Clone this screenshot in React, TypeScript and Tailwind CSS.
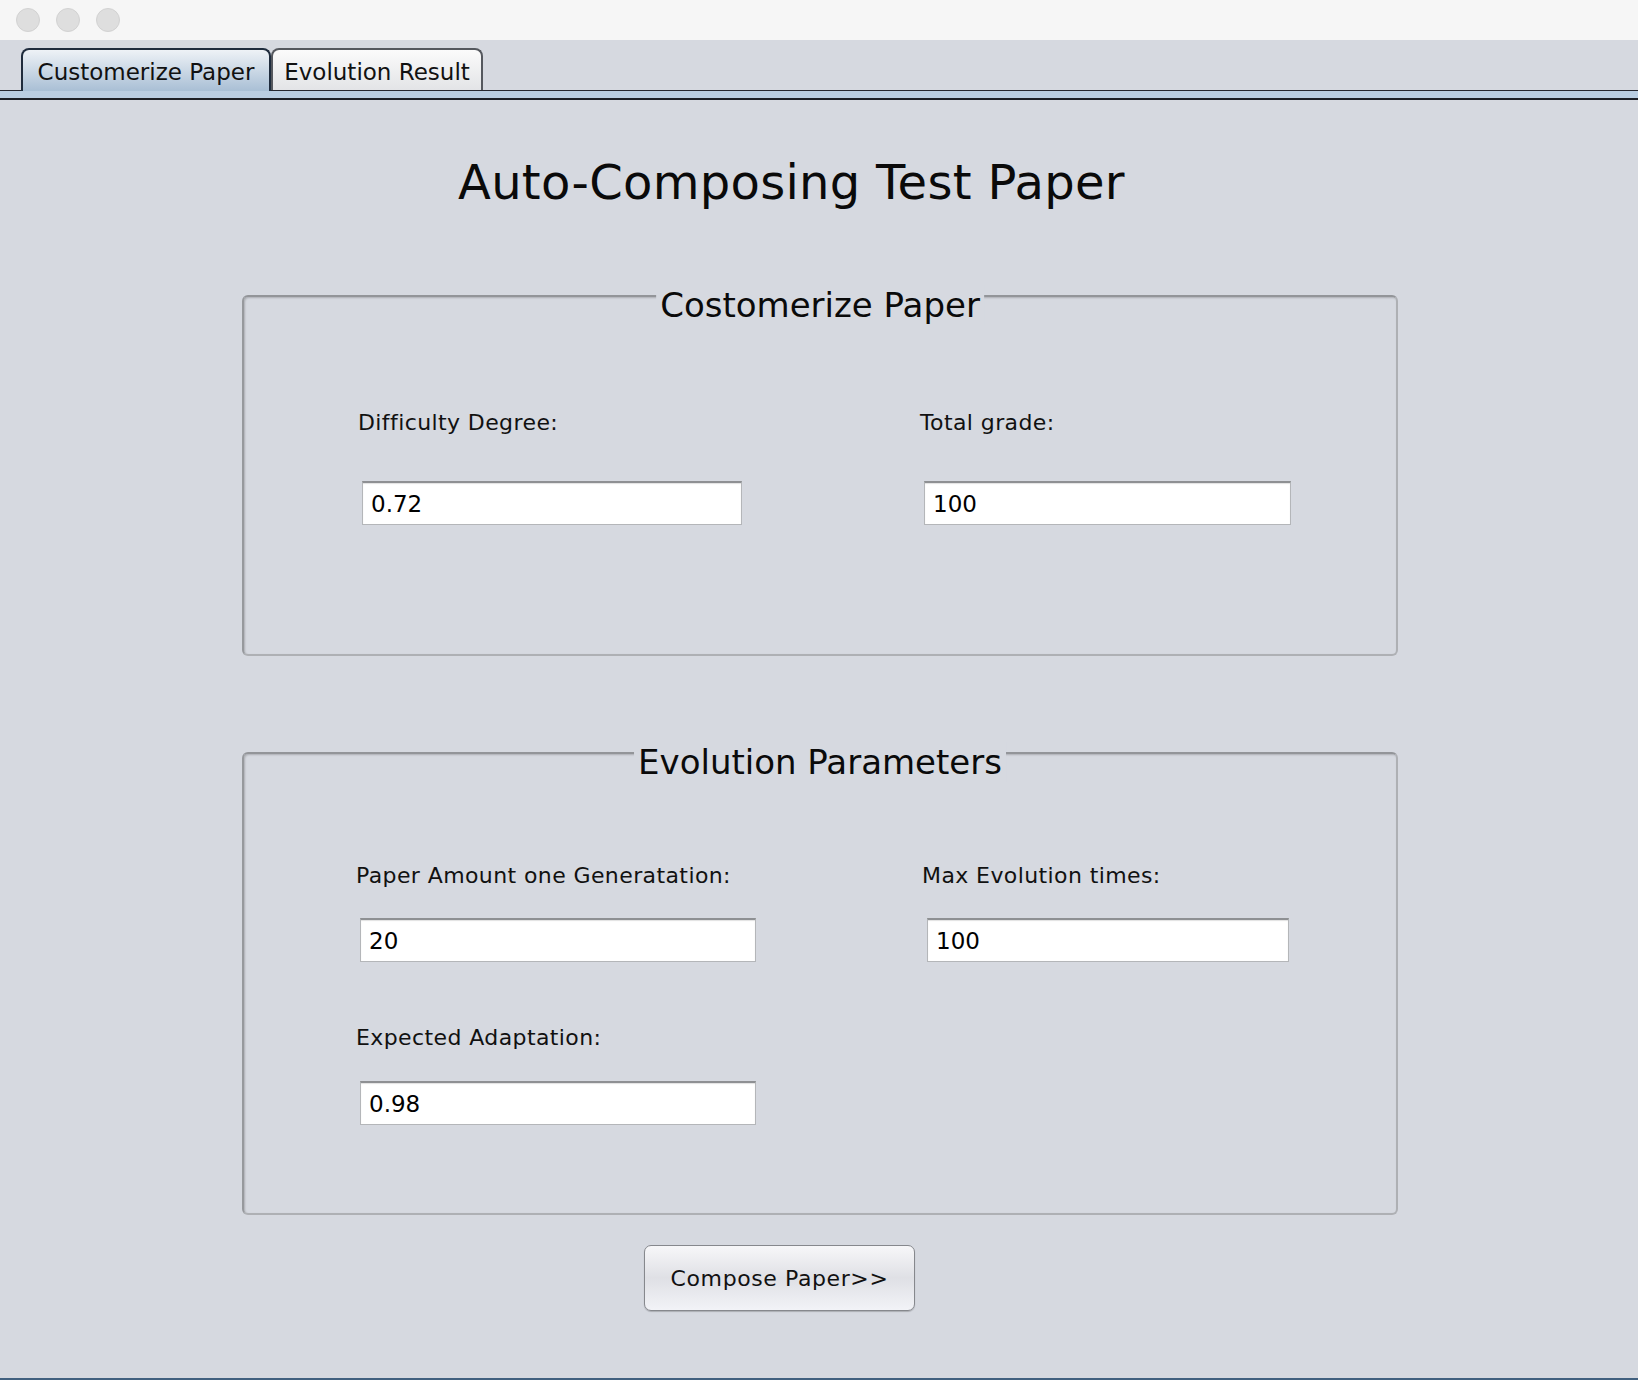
import React from 'react';

const font = "font-['DejaVu_Sans','Liberation_Sans',sans-serif]";

const Field: React.FC<{ label: string; value: string; width: string; gap: string; inset: string }> = ({ label, value, width, gap, inset }) => (
  <div className="flex flex-col">
    <span className="text-[22px] leading-[28px] tracking-[0.4px] text-[#111]">{label}</span>
    <input
      type="text"
      defaultValue={value}
      className={`${gap} ${inset} ${width} h-[44px] bg-white border border-[#b4b6b9] border-t-2 border-t-[#8e9093] shadow-[inset_0_1px_1px_rgba(0,0,0,0.12)] pl-[8px] text-[23px] text-black outline-none ${font}`}
    />
  </div>
);

const Panel: React.FC<{ title: string; height: string; children: React.ReactNode }> = ({ title, height, children }) => (
  <div
    className={`relative ml-[242px] w-[1156px] ${height} rounded-[6px] border-2 border-[#aeb0b4] border-t-[#939599] border-l-[#97999d] shadow-[inset_1px_1px_2px_rgba(0,0,0,0.2)]`}
  >
    <span className="absolute -top-[12px] left-1/2 -translate-x-1/2 bg-[#d6d9e0] px-[4px] text-[34px] leading-[40px] text-[#0a0a0a] whitespace-nowrap">
      {title}
    </span>
    {children}
  </div>
);

export default function App() {
  return (
    <div className={`h-[1380px] w-full flex flex-col bg-[#d6d9e0] ${font}`}>
      {/* window title bar */}
      <div className="h-[40px] bg-[#f6f6f6] flex items-center gap-[16px] pl-[16px]">
        <span className="w-[24px] h-[24px] rounded-full bg-[#dedede] border border-[#d2d2d2]" />
        <span className="w-[24px] h-[24px] rounded-full bg-[#dedede] border border-[#d2d2d2]" />
        <span className="w-[24px] h-[24px] rounded-full bg-[#dedede] border border-[#d2d2d2]" />
      </div>

      {/* tabs */}
      <div className="pt-[8px]">
        <div className="flex items-end h-[43px] border-b border-[#26262e] pl-[21px]">
          <div className="relative z-10 -mb-px h-[43px] w-[250px] rounded-t-[8px] border-2 border-b-0 border-[#1f2c3d] bg-gradient-to-b from-[#eef2f6] to-[#a9bfd5] flex items-center justify-center pt-[4px] text-[23px] text-[#111]">
            Customerize Paper
          </div>
          <div className="h-[42px] w-[212px] rounded-t-[8px] border-2 border-b-0 border-[#55585e] bg-gradient-to-b from-[#fbfbfb] to-[#e3e4e7] flex items-center justify-center pt-[4px] text-[23px] text-[#111]">
            Evolution Result
          </div>
        </div>
        <div className="h-[7px] bg-[#bacde1]" />
        <div className="h-[2px] bg-[#1d1f26]" />
      </div>

      {/* content */}
      <div className="flex-1 flex flex-col">
        <h1 className="mt-[56px] pl-[458px] text-[48px] leading-[52px] tracking-[0.3px] font-normal text-[#0a0a0a]">Auto-Composing Test Paper</h1>

        <div className="mt-[87px]">
          <Panel title="Costomerize Paper" height="h-[361px]">
            <div className="flex pt-[112px] pl-[114px]">
              <div className="w-[562px]">
                <Field label="Difficulty Degree:" value="0.72" width="w-[380px]" gap="mt-[44px]" inset="ml-[4px]" />
              </div>
              <Field label="Total grade:" value="100" width="w-[367px]" gap="mt-[44px]" inset="ml-[4px]" />
            </div>
          </Panel>
        </div>

        <div className="mt-[96px]">
          <Panel title="Evolution Parameters" height="h-[463px]">
            <div className="flex flex-col pt-[108px] pl-[112px]">
              <div className="flex">
                <div className="w-[566px]">
                  <Field label="Paper Amount one Generatation:" value="20" width="w-[396px]" gap="mt-[28px]" inset="ml-[4px]" />
                </div>
                <Field label="Max Evolution times:" value="100" width="w-[362px]" gap="mt-[28px]" inset="ml-[5px]" />
              </div>
              <div className="mt-[62px]">
                <Field label="Expected Adaptation:" value="0.98" width="w-[396px]" gap="mt-[29px]" inset="ml-[4px]" />
              </div>
            </div>
          </Panel>
        </div>

        <button className="mt-[30px] ml-[644px] w-[271px] h-[66px] rounded-[7px] border border-[#86888d] bg-gradient-to-b from-[#f7f7f9] via-[#dfe0e5] to-[#f2f3f7] shadow-[0_1px_1px_rgba(0,0,0,0.2)] text-[22px] text-[#111] tracking-[0.6px]">
          Compose Paper&gt;&gt;
        </button>
      </div>

      <div className="h-[2px] bg-[#41607f]" />
    </div>
  );
}
